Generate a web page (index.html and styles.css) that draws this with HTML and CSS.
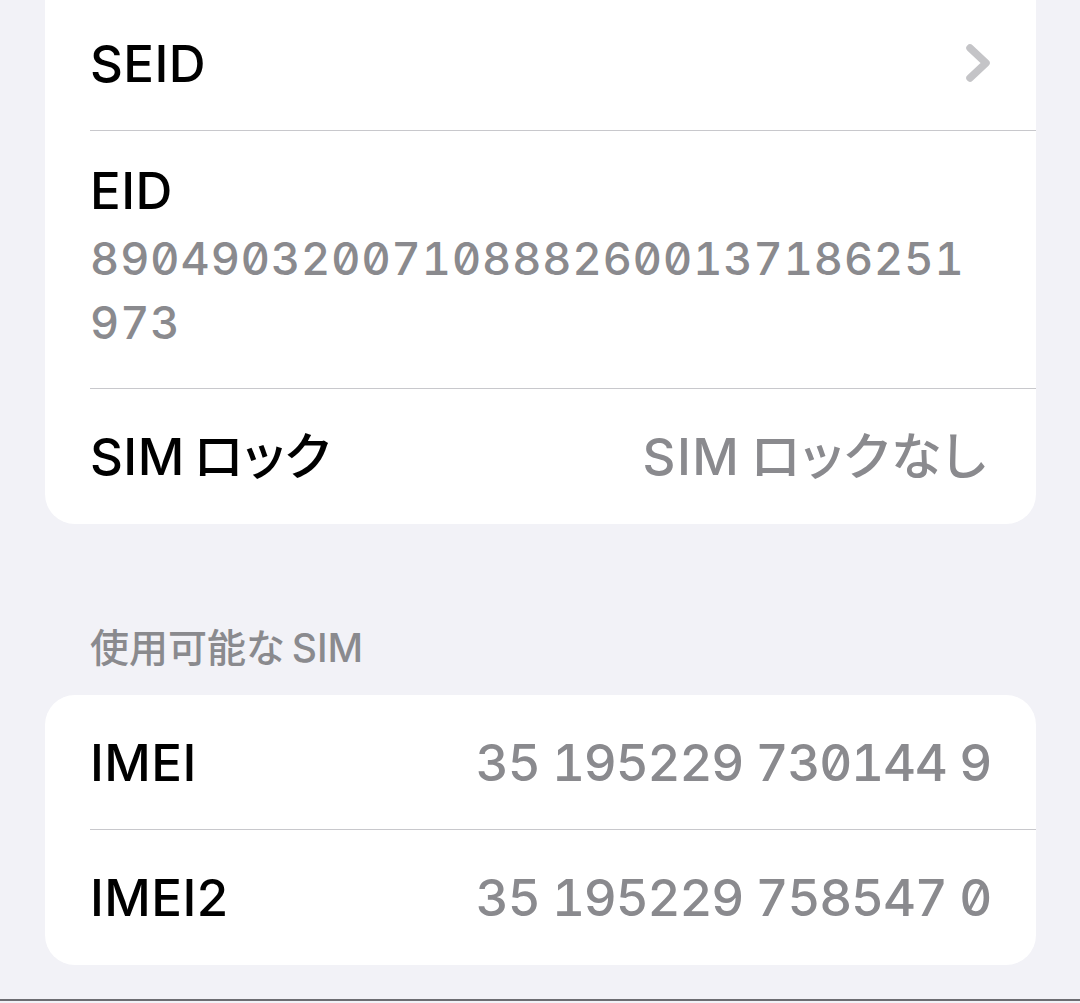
FILE: index.html
```html
<!DOCTYPE html>
<html lang="ja">
	<head>
		<meta charset="utf-8">
		<meta name="viewport" content="width=device-width, initial-scale=1.0">
		<title>情報</title>
		<link rel="stylesheet" href="styles.css">
	</head>

	<body>
		<div class="screen">

			<div class="group group-cut">
				<div class="row">
					<span class="label">SEID</span>
					<svg class="chevron" width="26" height="40" viewBox="0 0 26 40">
						<polyline points="5,5 21,20 5,35" fill="none" stroke="currentColor" stroke-width="7.5" stroke-linecap="round" stroke-linejoin="round"/>
					</svg>
				</div>
				<div class="row row-stack">
					<span class="label">EID</span>
					<span class="eid-value">89049032007108882600137186251973</span>
				</div>
				<div class="row">
					<span class="label">SIM&#8201;ロック</span>
					<span class="value value-text">SIM&#8201;ロックなし</span>
				</div>
			</div>

			<div class="section-title">使用可能な&#8201;SIM</div>

			<div class="group">
				<div class="row">
					<span class="label">IMEI</span>
					<span class="value digits">35 195229 730144 9</span>
				</div>
				<div class="row">
					<span class="label">IMEI2</span>
					<span class="value digits">35 195229 758547 0</span>
				</div>
			</div>

		</div>
	</body>
</html>
```

FILE: styles.css
```css
body {
	margin: 0;
	background-color: #f2f2f7;
	font-family: "Inter", "Noto Sans CJK JP", sans-serif;
	color: #000000;
}

.screen {
	min-height: 1001px;
	box-sizing: border-box;
	padding: 0 44px 0 45px;
	border-bottom: 2px solid #6d6d72;
	overflow: hidden;
}

.group {
	background-color: #ffffff;
	border-radius: 30px;
	overflow: hidden;
}

/* list is scrolled, its top edge is above the screen */
.group-cut {
	margin-top: -4px;
	border-radius: 0 0 30px 30px;
}

.row {
	display: flex;
	align-items: center;
	justify-content: space-between;
	min-height: 135px;
	box-sizing: border-box;
	margin-left: 45px;
	padding-right: 45px;
	border-bottom: 1px solid #c8c8cc;
}

.row:last-child {
	border-bottom: none;
}

.row-stack {
	flex-direction: column;
	align-items: flex-start;
	justify-content: flex-start;
	padding-top: 29px;
	padding-bottom: 33px;
}

.label {
	font-size: 51px;
	line-height: 61px;
	font-weight: 500;
	letter-spacing: 0.4px;
	font-feature-settings: "palt";
}

.value {
	font-size: 51px;
	line-height: 61px;
	color: #8a8a8e;
	font-weight: 500;
	letter-spacing: -0.3px;
	font-feature-settings: "palt";
}

.value-text {
	letter-spacing: 1.5px;
	margin-right: 4px;
}

.digits {
	letter-spacing: -1.2px;
	font-feature-settings: "tnum", "zero";
}

.eid-value {
	margin-top: 6px;
	max-width: 890px;
	font-size: 45px;
	line-height: 64px;
	color: #8a8a8e;
	font-weight: 500;
	letter-spacing: 1px;
	word-break: break-all;
	font-feature-settings: "tnum", "zero";
}

.chevron {
	color: #c4c4c7;
}

.section-title {
	margin-top: 100px;
	margin-bottom: 23px;
	padding-left: 45px;
	font-size: 39px;
	line-height: 48px;
	color: #8a8a8e;
	font-weight: 500;
}
```
